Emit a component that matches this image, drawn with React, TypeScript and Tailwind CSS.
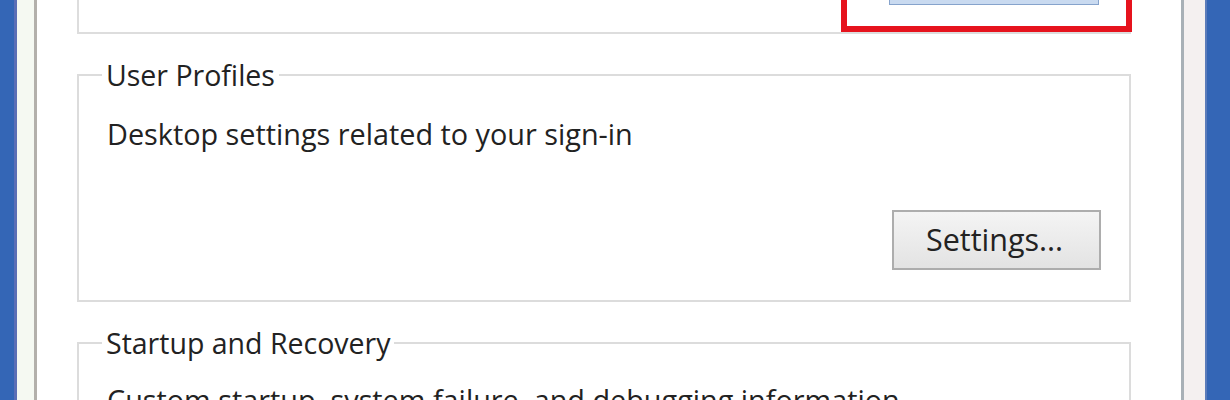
import React from 'react'

const Group = ({ title, children }: { title: string; children: React.ReactNode }) => (
  <fieldset className="border-2 border-[#dcdcdc] p-0">
    <legend className="ml-[23px] px-[4px] text-[28.5px] leading-[38px]">{title}</legend>
    {children}
  </fieldset>
)

export default function App() {
  return (
    <div className="flex h-[400px] w-[1230px] overflow-hidden bg-white font-['Open_Sans',sans-serif] text-[#222222]">
      {/* left window frame */}
      <div className="w-[14px] bg-[#3466b6]" />
      <div className="w-[3px] bg-[#5b6fb6]" />
      <div className="w-[17px] bg-[#f5f9f2]" />
      <div className="w-[3px] bg-[#b3b0ab]" />

      <main className="flex flex-1 flex-col pl-[40px] pr-[50px]">
        {/* previous group, cut off at top */}
        <div className="flex h-[39px] justify-end border-x-2 border-b-2 border-[#dddddd]">
          <div className="-mr-[3px] flex h-[32px] w-[291px] justify-center border-[6px] border-t-0 border-[#e6131d] bg-white">
            <div className="ml-[14px] h-[5px] w-[210px] border-x border-b border-[#86a3cc] bg-[#c9daf0]" />
          </div>
        </div>

        <div className="mt-[22px]">
          <Group title="User Profiles">
            <div className="flex flex-col px-[28px] pb-[30px] pt-[21px]">
              <p className="text-[28.8px] leading-[38px]">Desktop settings related to your sign-in</p>
              <div className="mt-[57px] flex justify-end">
                <button className="h-[60px] w-[209px] border-2 border-[#adadad] bg-gradient-to-b from-[#f4f4f4] to-[#e3e3e3] pr-[4px] text-[30.5px]">
                  Settings...
                </button>
              </div>
            </div>
          </Group>
        </div>

        <div className="mt-[22px]">
          <Group title="Startup and Recovery">
            <div className="px-[28px] pt-[19px]">
              <p className="text-[28.8px] leading-[38px]">Custom startup, system failure, and debugging information</p>
            </div>
          </Group>
        </div>
      </main>

      {/* right window frame */}
      <div className="w-[3px] bg-[#a8b0b6]" />
      <div className="w-[21px] bg-[#f4f0f0]" />
      <div className="w-[2px] bg-[#5b7cba]" />
      <div className="w-[23px] bg-[#3466b6]" />
    </div>
  )
}
